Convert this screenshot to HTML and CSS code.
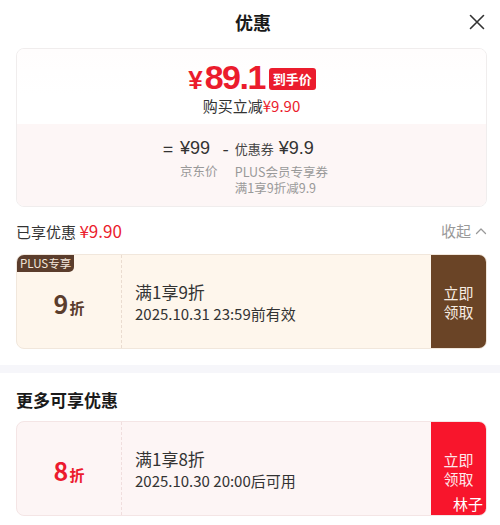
FILE: index.html
```html
<!DOCTYPE html>
<html lang="zh-CN">
<head>
<meta charset="utf-8">
<link rel="stylesheet" href="styles.css">
</head>
<body>
<div class="page">
  <header class="header">
    <h1 class="title">优惠</h1>
    <button class="close" aria-label="关闭">
      <svg width="16" height="16" viewBox="0 0 16 16"><path d="M1.5 1.5 L14.5 14.5 M14.5 1.5 L1.5 14.5" stroke="#333" stroke-width="1.6" stroke-linecap="round" fill="none"/></svg>
    </button>
  </header>

  <section class="summary">
    <div class="summary-top">
      <div class="final">
        <span class="final-price"><span class="yen">¥</span>89.1</span>
        <span class="badge">到手价</span>
      </div>
      <div class="saving">购买立减<span class="red">¥9.90</span></div>
    </div>
    <div class="summary-bottom">
      <div class="calc">
        <div class="op op-eq">=</div>
        <div class="calc-item">
          <div class="calc-value">¥99</div>
          <div class="calc-label">京东价</div>
        </div>
        <div class="op op-minus">-</div>
        <div class="calc-item">
          <div class="calc-value"><span class="calc-small">优惠券</span> ¥9.9</div>
          <div class="calc-label">PLUS会员专享券</div>
          <div class="calc-label calc-label2">满1享9折减9.9</div>
        </div>
      </div>
    </div>
  </section>

  <div class="enjoyed">
    <div class="enjoyed-left">已享优惠 <span class="enjoyed-amount">¥9.90</span></div>
    <div class="fold">收起
      <svg width="12" height="8" viewBox="0 0 12 8"><path d="M1.5 6.5 L6 2 L10.5 6.5" stroke="#999" stroke-width="1.3" fill="none" stroke-linecap="round" stroke-linejoin="round"/></svg>
    </div>
  </div>

  <div class="coupon coupon-plus">
    <span class="tag">PLUS专享</span>
    <div class="coupon-left"><span class="num">9</span><span class="unit">折</span></div>
    <div class="coupon-mid">
      <div class="coupon-title">满1享9折</div>
      <div class="coupon-time">2025.10.31 23:59前有效</div>
    </div>
    <div class="coupon-btn"><span class="btn-text"><span class="btn-line">立即</span><span class="btn-line">领取</span></span></div>
  </div>

  <div class="band"></div>

  <h2 class="section-title">更多可享优惠</h2>

  <div class="coupon coupon-red">
    <div class="coupon-left"><span class="num">8</span><span class="unit">折</span></div>
    <div class="coupon-mid">
      <div class="coupon-title">满1享8折</div>
      <div class="coupon-time">2025.10.30 20:00后可用</div>
    </div>
    <div class="coupon-btn"><span class="btn-text"><span class="btn-line">立即</span><span class="btn-line">领取</span></span><span class="watermark">林子</span></div>
  </div>
</div>
</body>
</html>
```

FILE: styles.css
```css
* { box-sizing: border-box; }
html, body { margin: 0; padding: 0; background: #fff; }
body {
  font-family: "Noto Sans CJK SC", "Noto Sans", "Liberation Sans", sans-serif;
  color: #222;
  width: 500px;
}
.page { padding: 0 13px 0 16px; }

.header {
  height: 48px;
  display: flex;
  align-items: center;
  justify-content: center;
  position: relative;
  padding-bottom: 4px;
}
.title {
  margin: 0;
  font-size: 18px;
  font-weight: 700;
  color: #1a1a1a;
  line-height: 24px;
  padding-left: 3px;
}
.close {
  position: absolute;
  right: 2px;
  top: 14px;
  width: 16px;
  height: 16px;
  padding: 0;
  border: 0;
  background: none;
  display: flex;
}

.summary {
  border: 1px solid #f0eded;
  border-radius: 8px;
  overflow: hidden;
  background: #fff;
}
.summary-top {
  height: 75px;
  padding-top: 11px;
  display: flex;
  flex-direction: column;
  align-items: center;
  background: linear-gradient(180deg, #fffdfd 0%, #fff 60%);
}
.final {
  display: flex;
  align-items: center;
  gap: 4px;
  height: 36px;
  padding-left: 1px;
}
.final-price {
  font-family: "Liberation Sans", Arial, sans-serif;
  font-size: 34px;
  font-weight: 700;
  color: #eb1c2d;
  line-height: 36px;
  letter-spacing: -1.5px;
}
.final-price .yen { font-size: 26px; margin-right: 2px; letter-spacing: 0; }
.badge {
  background: #eb1c2d;
  color: #fff;
  font-size: 13px;
  font-weight: 700;
  line-height: 22px;
  height: 22px;
  padding: 0 4px;
  border-radius: 3px;
  margin-top: 2px;
}
.saving {
  font-size: 15px;
  line-height: 20px;
  color: #333;
}
.red { color: #eb1c2d; }

.summary-bottom {
  background: #fdf6f6;
  height: 82px;
  padding-top: 12px;
}
.calc {
  display: flex;
  justify-content: center;
  padding-right: 12px;
}
.op {
  font-size: 18px;
  line-height: 24px;
  color: #333;
}
.op-eq { margin-right: 7px; }
.op-minus { margin: 0 6px 0 5px; }
.calc-value {
  font-family: "Liberation Sans", "Noto Sans CJK SC", sans-serif;
  font-size: 18px;
  line-height: 24px;
  color: #333;
  white-space: nowrap;
}
.calc-small {
  font-family: "Noto Sans CJK SC", sans-serif;
  font-size: 13px;
  color: #444;
}
.calc-label {
  margin-top: 3px;
  font-size: 12.5px;
  line-height: 16px;
  height: 16px;
  color: #999;
  white-space: nowrap;
}
.calc-label2 { margin-top: 0; }

.enjoyed {
  height: 47px;
  display: flex;
  align-items: center;
  justify-content: space-between;
}
.enjoyed-left { font-size: 15px; color: #333; }
.enjoyed-amount { font-size: 17px; color: #eb1c2d; }
.fold {
  font-size: 15px;
  color: #999;
  display: flex;
  align-items: center;
  gap: 4px;
}

.coupon {
  position: relative;
  display: flex;
  height: 95px;
  border-radius: 8px;
  overflow: hidden;
  border: 1px solid #f1e7dc;
}
.coupon-plus { background: #fef6ec; }
.coupon-red { background: #fdf5f5; border-color: #f4e5e5; }

.tag {
  position: absolute;
  left: 0;
  top: 0;
  height: 17px;
  padding: 0 3px;
  background: #5b3d2c;
  color: #f3e6da;
  font-size: 11.5px;
  line-height: 17px;
  border-radius: 0 0 5px 0;
}
.coupon-left {
  width: 105px;
  flex: none;
  display: flex;
  align-items: baseline;
  justify-content: center;
  padding-top: 33px;
  border-right: 1px dashed #eadcd0;
}
.coupon-red .coupon-left { border-right-color: #f0dede; }
.num { font-size: 25px; font-weight: 700; line-height: 30px; }
.unit { font-size: 15px; font-weight: 700; margin-left: 1px; }
.coupon-plus .coupon-left { color: #5b3d2c; }
.coupon-red .coupon-left { color: #ec1a2e; }

.coupon-mid {
  flex: 1;
  padding-left: 13px;
  display: flex;
  flex-direction: column;
  justify-content: center;
  color: #333;
}
.coupon-title { font-size: 17px; line-height: 23px; }
.coupon-time { font-size: 15px; line-height: 21px; }

.coupon-btn {
  position: relative;
  width: 55px;
  flex: none;
  display: flex;
  align-items: center;
  justify-content: center;
  text-align: center;
  color: #fff;
}
.btn-text {
  display: flex;
  flex-direction: column;
  padding-top: 1px;
}
.btn-line {
  font-size: 15px;
  line-height: 19px;
  height: 19px;
}
.coupon-plus .coupon-btn { background: #6a4426; color: #f7ece2; }
.coupon-red .coupon-btn { background: #f8152c; color: #fde7e9; }
.watermark {
  position: absolute;
  right: 3px;
  bottom: 2px;
  font-size: 15px;
  line-height: 18px;
  color: #fff;
}

.band {
  height: 8px;
  background: #f6f6fa;
  margin: 16px -13px 0 -16px;
}
.section-title {
  margin: 0;
  height: 48px;
  display: flex;
  align-items: center;
  font-size: 17px;
  font-weight: 700;
  color: #1a1a1a;
  padding-top: 4px;
}
```
